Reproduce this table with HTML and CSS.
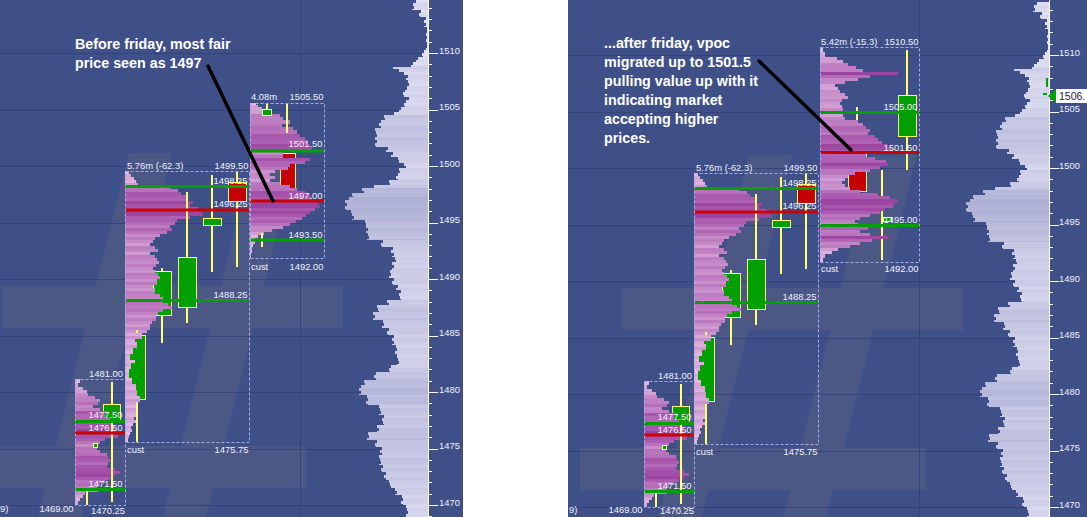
FILE: index.html
```html
<!DOCTYPE html>
<html lang="en">
<head>
<meta charset="utf-8">
<title>Market profile – before / after friday</title>
<link rel="stylesheet" href="styles.css">
</head>
<body>
<main class="page">
  <section class="panel panel-left">
    <svg class="chart" width="463" height="517" viewBox="0 0 463 517">
      <rect class="bg" x="0" y="0" width="463" height="517"/>
      <path class="wm" d="M129 153 L172 153 L81 517 L38 517 Z M254 153 L297 153 L206 517 L163 517 Z M2 286 H343 V328 H2 Z M-40 446 H306 V488 H-40 Z"/>
      <g id="L-grid" class="grid"></g>
      <g id="L-vp"></g>
      <g id="L-AB"></g>
      <g id="L-C"></g>
      <g class="lbl">
        <text x="127" y="169">5.76m (-62.3)</text>
        <text class="r" x="248.5" y="169">1499.50</text>
        <text class="r" x="247.5" y="184">1498.25</text>
        <text class="r" x="247.5" y="207">1496.25</text>
        <text class="r" x="247.5" y="298">1488.25</text>
        <text x="127" y="453">cust</text>
        <text class="r" x="248.5" y="453">1475.75</text>
        <text class="r" x="123" y="377">1481.00</text>
        <text class="r" x="122.5" y="418">1477.50</text>
        <text class="r" x="122.5" y="430.5">1476.50</text>
        <text class="r" x="122.5" y="487">1471.50</text>
        <text class="r" x="73.5" y="512">1469.00</text>
        <text class="r" x="125" y="514">1470.25</text>
        <text x="0" y="512">9)</text>
        <text x="251" y="100">4.08m</text>
        <text class="r" x="323.5" y="100">1505.50</text>
        <text class="r" x="322.5" y="147">1501.50</text>
        <text class="r" x="322.5" y="199">1497.00</text>
        <text class="r" x="322.5" y="238">1493.50</text>
        <text x="251" y="270">cust</text>
        <text class="r" x="323.5" y="270">1492.00</text>
      </g>
      <g id="L-axis" class="axis"></g>
      <g class="lbl axis-lbl">
        <text x="439" y="53.5">1510</text>
        <text x="439" y="110">1505</text>
        <text x="439" y="166.5">1500</text>
        <text x="439" y="223">1495</text>
        <text x="439" y="279.5">1490</text>
        <text x="439" y="336">1485</text>
        <text x="439" y="392.5">1480</text>
        <text x="439" y="449">1475</text>
        <text x="439" y="505.5">1470</text>
      </g>
      <text class="note">
        <tspan x="75" y="49">Before friday, most fair</tspan>
        <tspan x="75" y="68">price seen as 1497</tspan>
      </text>
      <line class="arrow" x1="208" y1="66" x2="273" y2="201"/>
    </svg>
  </section>

  <div class="gap"></div>

  <section class="panel panel-right">
    <svg class="chart" width="519" height="517" viewBox="568 0 519 517">
      <rect class="bg" x="568" y="0" width="519" height="517"/>
      <path class="wm" transform="translate(620 2)" d="M129 153 L172 153 L81 517 L38 517 Z M254 153 L297 153 L206 517 L163 517 Z M2 286 H343 V328 H2 Z M-40 446 H306 V488 H-40 Z"/>
      <g id="R-grid" class="grid"></g>
      <g id="R-vp" transform="translate(621 2)"></g>
      <g transform="translate(569 2)">
        <g id="R-AB"></g>
        <g class="lbl">
          <text x="127" y="169">5.76m (-62.3)</text>
          <text class="r" x="248.5" y="169">1499.50</text>
          <text class="r" x="247.5" y="184">1498.25</text>
          <text class="r" x="247.5" y="207">1496.25</text>
          <text class="r" x="247.5" y="298">1488.25</text>
          <text x="127" y="453">cust</text>
          <text class="r" x="248.5" y="453">1475.75</text>
          <text class="r" x="123" y="377">1481.00</text>
          <text class="r" x="122.5" y="418">1477.50</text>
          <text class="r" x="122.5" y="430.5">1476.50</text>
          <text class="r" x="122.5" y="487">1471.50</text>
          <text class="r" x="73.5" y="511">1469.00</text>
          <text class="r" x="125" y="512">1470.25</text>
          <text x="0" y="511">9)</text>
        </g>
      </g>
      <g id="R-C"></g>
      <g class="lbl">
        <text x="821" y="45">5.42m (-15.3)</text>
        <text class="r" x="918.5" y="45">1510.50</text>
        <text class="r" x="917.5" y="110">1505.00</text>
        <text class="r" x="917.5" y="150.5">1501.50</text>
        <text class="r" x="917.5" y="223">1495.00</text>
        <text x="821" y="272">cust</text>
        <text class="r" x="918.5" y="272">1492.00</text>
      </g>
      <g id="R-axis" class="axis"></g>
      <g class="lbl axis-lbl">
        <text x="1059" y="55.5">1510</text>
        <text x="1059" y="112">1505</text>
        <text x="1059" y="168.5">1500</text>
        <text x="1059" y="225">1495</text>
        <text x="1059" y="281.5">1490</text>
        <text x="1059" y="338">1485</text>
        <text x="1059" y="394.5">1480</text>
        <text x="1059" y="451">1475</text>
        <text x="1059" y="507.5">1470</text>
      </g>
      <rect class="mark" x="1046" y="78" width="2" height="9"/>
      <rect class="mark" x="1043" y="93" width="4" height="2"/>
      <polygon class="mark" points="1048,96 1056,89 1056,103"/>
      <rect class="price-tag" x="1056" y="89" width="31" height="14"/>
      <text class="price-txt" x="1059" y="100">1506.</text>
      <text class="note">
        <tspan x="604" y="48">...after friday, vpoc</tspan>
        <tspan x="604" y="67">migrated up to 1501.5</tspan>
        <tspan x="604" y="86">pulling value up with it</tspan>
        <tspan x="604" y="105">indicating market</tspan>
        <tspan x="604" y="124">accepting higher</tspan>
        <tspan x="604" y="143">prices.</tspan>
      </text>
      <line class="arrow" x1="759" y1="61" x2="851" y2="150"/>
    </svg>
  </section>
</main>
<script src="script.js"></script>
</body>
</html>
```

FILE: styles.css
```css
html, body {
  margin: 0;
  padding: 0;
  background: #ffffff;
}

.page {
  display: flex;
  width: 1087px;
  height: 517px;
  overflow: hidden;
}

.panel {
  flex: none;
  height: 517px;
}

.panel-left { width: 463px; }
.panel-right { width: 519px; }

.gap {
  flex: none;
  width: 105px;
  background: #ffffff;
}

.chart {
  display: block;
}

.bg { fill: #3f5089; }
.wm { fill: #4b5886; }

.grid line {
  stroke: #34447b;
  stroke-width: 1;
}

.axis line {
  stroke: #ffffff;
  stroke-width: 1;
}

.lbl {
  font-family: "Liberation Sans", Arial, sans-serif;
  font-size: 9.4px;
  fill: #f0f0fa;
}

.lbl .r { text-anchor: end; }

.note {
  font-family: "Liberation Sans", Arial, sans-serif;
  font-weight: 700;
  font-size: 14.3px;
  fill: #ffffff;
}

.arrow {
  stroke: #000000;
  stroke-width: 3.5;
  stroke-linecap: round;
}

.box {
  fill: none;
  stroke: #a9a9ee;
  stroke-width: 1;
  stroke-dasharray: 3 2;
}

.wick { fill: #ffff72; }

.body-g {
  fill: #00a000;
  stroke: #ffff72;
  stroke-width: 1;
}

.body-r {
  fill: #c40000;
  stroke: #ffff72;
  stroke-width: 1;
}

.lvl-g { fill: #00a000; }
.lvl-r { fill: #cc0000; }

.mark { fill: #00a000; }
.price-tag { fill: #ffffff; }

.price-txt {
  font-family: "Liberation Sans", Arial, sans-serif;
  font-size: 10.5px;
  fill: #22224a;
}
```

FILE: script.js
```js
(function () {
  var NS = 'http://www.w3.org/2000/svg';

  function el(tag, attrs, parent) {
    var e = document.createElementNS(NS, tag);
    for (var k in attrs) e.setAttribute(k, attrs[k]);
    parent.appendChild(e);
    return e;
  }
  function clamp(t) { return t < 0 ? 0 : (t > 1 ? 1 : t); }
  function mix(a, b, t) {
    t = clamp(t);
    return 'rgb(' + Math.round(a[0] + (b[0] - a[0]) * t) + ',' +
      Math.round(a[1] + (b[1] - a[1]) * t) + ',' +
      Math.round(a[2] + (b[2] - a[2]) * t) + ')';
  }
  function toRows(list, end) {
    return list.map(function (r, i) {
      return { y: r[0], y1: i + 1 < list.length ? list[i + 1][0] : end, xr: r[1] };
    });
  }

  var PL = [228, 190, 228], PD = [156, 68, 162];
  var VL = [224, 224, 242], VD = [174, 176, 213];

  function drawBars(g, x0, rows, maxW, only) {
    rows.forEach(function (r, i) {
      if (only && !only(r)) return;
      var w = r.xr - x0;
      if (w <= 0) return;
      var t = Math.pow(clamp(w / maxW), 0.85) + (((i * 5) % 3) - 1) * 0.09;
      el('rect', { x: x0, y: r.y, width: w, height: r.y1 - r.y, fill: mix(PL, PD, t) }, g);
    });
  }
  function wick(g, w) {
    el('rect', { x: w[0] - 1, y: w[1], width: 2, height: w[2] - w[1], 'class': 'wick' }, g);
  }
  function body(g, b) {
    el('rect', { x: b[0] + 0.5, y: b[1] + 0.5, width: b[2] - 1, height: b[3] - 1,
      'class': b[4] === 'r' ? 'body-r' : 'body-g' }, g);
  }

  function drawProfile(g, p) {
    var rows = toRows(p.rows, p.bottom);
    if (p.wicksFirst) p.wicks.forEach(function (w) { wick(g, w); });
    drawBars(g, p.x0, rows, p.maxW);
    if (!p.wicksFirst) p.wicks.forEach(function (w) { wick(g, w); });
    p.bodies.forEach(function (b) { body(g, b); });
    var over = p.over.map(function (i) { return p.bodies[i]; });
    drawBars(g, p.x0, rows, p.maxW, function (r) {
      return over.some(function (b) { return r.y < b[1] + b[3] && r.y1 > b[1]; });
    });
    p.levels.forEach(function (l) {
      el('rect', { x: p.x0, y: l[0], width: p.x1 - p.x0, height: 3, 'class': l[1] === 'r' ? 'lvl-r' : 'lvl-g' }, g);
    });
    el('rect', { x: p.x0 + 0.5, y: p.top + 0.5, width: p.x1 - p.x0, height: p.bottom - p.top, 'class': 'box' }, g);
  }

  var profA = {
    x0: 75, x1: 125, top: 379, bottom: 505, maxW: 45,
    rows: [[379,80],[383,78],[387,83],[390,87],[393,88],[396,95],[399,100],[402,98],[405,93],[408,100],[411,108],[414,105],[417,110],[420,110],[423,113],[426,115],[429,117],[432,118],[435,118],[438,105],[441,100],[444,95],[447,97],[450,100],[453,107],[456,108],[459,110],[462,108],[465,107],[468,115],[471,120],[474,115],[477,110],[480,105],[483,100],[486,97],[489,98],[492,85],[495,83],[498,80],[501,78]],
    wicks: [[112,382,502],[87,490,505]],
    bodies: [[103,404,18,18,'g'],[93,443,5,5,'g']],
    over: [0],
    levels: [[420,'g'],[431.5,'r'],[488,'g']]
  };

  var profB = {
    x0: 125, x1: 249, top: 171, bottom: 442, maxW: 78,
    rows: [[171,129],[174,131],[177,134],[180,136],[183,138],[186,170],[189,178],[192,181],[195,186],[198,188],[201,193],[204,190],[207,198],[210,202],[213,203],[216,190],[219,177],[222,175],[225,170],[228,172],[231,167],[234,160],[237,155],[240,153],[243,150],[246,155],[249,158],[252,150],[255,155],[258,157],[261,159],[264,156],[267,153],[270,155],[273,158],[276,160],[279,157],[282,157],[285,153],[288,155],[291,155],[294,160],[297,163],[300,163],[303,168],[306,172],[309,163],[312,158],[315,156],[318,156],[321,152],[324,150],[327,150],[330,147],[333,142],[336,142],[339,135],[342,137],[345,137],[348,133],[351,133],[354,130],[357,130],[360,135],[363,131],[366,131],[369,129],[372,129],[375,129],[378,132],[381,132],[384,136],[387,136],[390,137],[393,137],[396,140],[399,140],[402,138],[405,136],[408,138],[411,137],[414,136],[417,134],[420,136],[423,133],[426,131],[429,132],[432,130],[435,129],[438,128]],
    wicks: [[137,330,442],[162,268,343],[187,192,323],[212,175,272],[237,172,267]],
    bodies: [[128,335,18,65,'g'],[153,271,19,45,'g'],[178,257,19,51,'g'],[203,218,19,8,'g'],[228,182,19,20,'r']],
    over: [0, 1],
    levels: [[185,'g'],[208.5,'r'],[299,'g']]
  };

  var profC = {
    x0: 250, x1: 324, top: 103, bottom: 258, maxW: 70,
    rows: [[103,256],[105,258],[107,262],[110,270],[114,280],[117,283],[120,290],[124,282],[127,293],[130,297],[134,300],[137,305],[140,308],[144,310],[147,312],[152,283],[155,283],[158,310],[161,305],[164,290],[167,288],[170,275],[173,270],[176,275],[179,270],[182,280],[185,290],[188,297],[191,305],[194,310],[197,312],[202,318],[205,320],[208,315],[211,310],[214,306],[217,302],[220,296],[223,290],[226,283],[229,272],[232,264],[235,258],[238,255],[241,255],[244,253],[247,252],[250,252],[253,251]],
    wicks: [[287,103,133],[267,103,110],[262,233,247]],
    bodies: [[280,153,16,37,'r'],[262,109,10,7,'g']],
    over: [0],
    levels: [[149.5,'g'],[199.5,'r'],[238.5,'g']]
  };

  var profC2 = {
    x0: 820, x1: 919, top: 47, bottom: 262, maxW: 78, wicksFirst: true,
    rows: [[47,823],[52,825],[57,837],[60,843],[63,848],[66,856],[69,863],[72,898],[75,870],[78,858],[81,845],[84,835],[87,838],[90,840],[93,845],[96,848],[99,842],[102,840],[105,842],[108,843],[111,843],[114,843],[117,845],[120,858],[123,863],[126,866],[129,870],[132,868],[135,875],[138,878],[141,882],[144,888],[147,893],[150,893],[154,866],[157,875],[160,886],[163,888],[166,880],[169,870],[172,855],[175,848],[178,845],[181,842],[184,845],[187,850],[190,860],[193,878],[196,890],[199,898],[202,895],[205,893],[208,885],[211,880],[214,870],[217,860],[220,855],[223,858],[227,868],[230,860],[233,870],[236,888],[239,872],[242,860],[245,850],[248,838],[251,832],[254,825],[258,823]],
    wicks: [[857,107,154],[882,170,260],[907,50,170],[831,247,251]],
    bodies: [[848,154,19,38,'r'],[898,95,19,42,'g'],[883,217,9,5,'g']],
    over: [0],
    levels: [[111,'g'],[151,'r'],[224,'g']]
  };

  var VP = [[0,417],[3,413],[10,420],[17,425],[27,427],[50,423],[57,417],[62,412],[67,393],[69,398],[72,405],[75,407],[80,408],[87,406],[92,403],[97,410],[100,405],[107,400],[112,393],[115,385],[120,380],[128,376],[147,387],[152,392],[157,398],[163,405],[168,400],[173,397],[180,390],[185,373],[188,363],[193,353],[197,348],[200,346],[210,350],[213,353],[220,365],[225,367],[233,368],[240,382],[247,392],[253,393],[257,395],[262,393],[270,390],[278,393],[285,397],[290,400],[300,388],[305,378],[312,374],[320,383],[328,388],[335,393],[345,396],[355,398],[365,390],[372,375],[380,365],[385,360],[395,367],[405,380],[415,383],[425,378],[432,368],[440,376],[447,381],[455,380],[465,382],[472,385],[480,390],[488,396],[495,402],[505,407]];

  function drawVP(g, segs, end, axisX) {
    var k = 0;
    for (var i = 0; i < segs.length; i++) {
      var y0 = segs[i][0], y1 = i + 1 < segs.length ? segs[i + 1][0] : end, x = segs[i][1];
      for (var y = y0; y < y1; y += 3) {
        var h = Math.min(3, y1 - y);
        var j = ((k * 7) % 5 - 2) * 0.7;
        var xl = Math.min(axisX - 1, Math.round(x + j));
        var w = axisX - xl;
        var t = clamp((w - 4) / 80) + (((k * 3) % 4) - 1.5) * 0.05;
        el('rect', { x: xl, y: y, width: w, height: h, fill: mix(VL, VD, t) }, g);
        k++;
      }
    }
  }

  function drawGrid(g, x0, x1, yBase, vx) {
    for (var k = 0; k < 9; k++) {
      var y = Math.round(yBase + k * 56.5) + 0.5;
      el('line', { x1: x0, x2: x1, y1: y, y2: y }, g);
    }
    el('line', { x1: vx + 0.5, x2: vx + 0.5, y1: 0, y2: 517 }, g);
  }

  function drawAxis(g, ax, yBase) {
    el('line', { x1: ax + 0.5, x2: ax + 0.5, y1: 0, y2: 517 }, g);
    for (var p = 1516; p >= 1467; p--) {
      var y = Math.round(yBase + (1510 - p) * 11.3) + 0.5;
      if (y < 0 || y > 517) continue;
      var len = p % 5 === 0 ? 10 : 4;
      el('line', { x1: ax, x2: ax + len, y1: y, y2: y }, g);
    }
  }

  function byId(id) { return document.getElementById(id); }

  drawGrid(byId('L-grid'), 0, 428, 53, 300);
  drawGrid(byId('R-grid'), 568, 1049, 55, 919);
  drawVP(byId('L-vp'), VP, 517, 428);
  drawVP(byId('R-vp'), VP, 517, 428);
  [byId('L-AB'), byId('R-AB')].forEach(function (g) {
    drawProfile(g, profA);
    drawProfile(g, profB);
  });
  drawProfile(byId('L-C'), profC);
  drawProfile(byId('R-C'), profC2);
  drawAxis(byId('L-axis'), 428, 53);
  drawAxis(byId('R-axis'), 1049, 55);
})();
```
